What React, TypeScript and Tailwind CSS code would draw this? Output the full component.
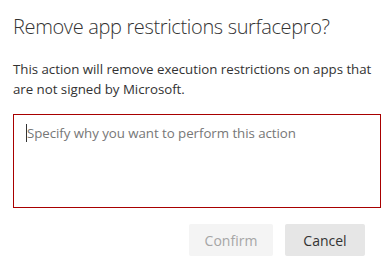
export default function App() {
  return (
    <div className="w-[390px] h-[276px] bg-white overflow-hidden pl-[13px] pr-[10px]" style={{ fontFamily: '"Open Sans", "Noto Sans", sans-serif' }}>
      <h1 className="pt-[13px] text-[20px] leading-[28px] font-light tracking-[-0.35px] text-[#333333] whitespace-nowrap">Remove app restrictions surfacepro?</h1>
      <p className="mt-[18px] text-[13.3px] leading-[20px] tracking-[-0.03px] text-[#333333]">
        This action will remove execution restrictions on apps that are not signed by Microsoft.
      </p>
      <div className="mt-[15px] w-[368px] h-[94px] border border-solid border-[color:#a80000] px-[12px] pt-[7px] flex items-start">
        <span className="w-px h-[18px] bg-[#333333] mt-[2px]"></span>
        <span className="text-[13.3px] leading-[22px] tracking-[-0.05px] text-[#777777]">Specify why you want to perform this action</span>
      </div>
      <div className="mt-[16px] flex justify-end gap-[12px] pr-[15px]">
        <button className="w-[84px] h-[32px] bg-[#f4f4f4] text-[#a6a6a6] text-[14px] rounded-[2px]">Confirm</button>
        <button className="w-[80px] h-[32px] bg-[#e6e6e6] text-[#333333] text-[14px] rounded-[2px]">Cancel</button>
      </div>
    </div>
  );
}
